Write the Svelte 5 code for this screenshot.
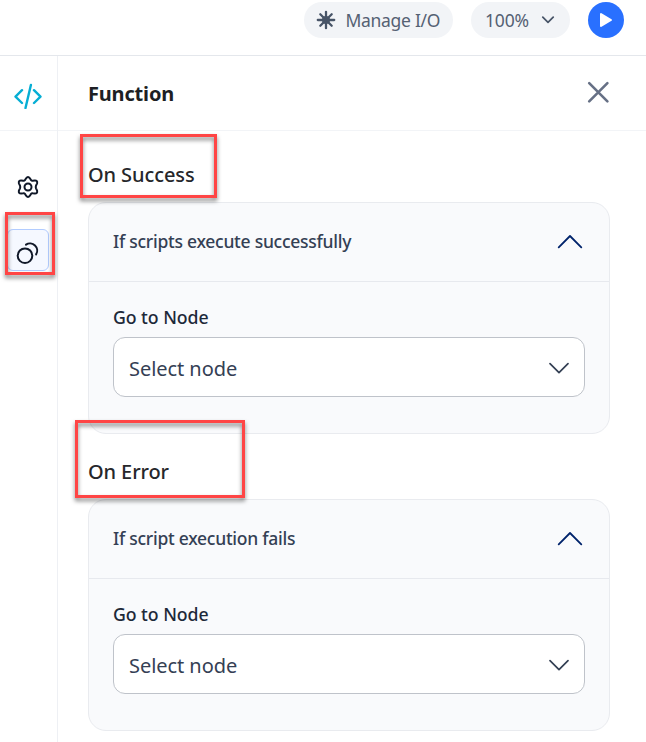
<script>
  const sections = [
    { title: 'On Success', rule: 'If scripts execute successfully', cls: 'success' },
    { title: 'On Error', rule: 'If script execution fails', cls: 'error' },
  ];
</script>

<div class="app">
  <header class="topbar">
    <button class="pill io">
      <svg width="20" height="20" viewBox="0 0 20 20" fill="none" stroke="#475467" stroke-width="2.3" stroke-linecap="round">
        <path d="M10 1.800v16.400M1.800 10h16.400M4.300 4.300l11.400 11.400M15.700 4.300L4.300 15.700" />
        <circle cx="10" cy="10" r="4" fill="#475467" stroke="none" />
      </svg>
      <span class="manage">Manage I/O</span>
    </button>
    <button class="pill zoom">
      <span class="percent">100%</span>
      <svg width="14" height="9" viewBox="0 0 14 9" fill="none" stroke="#475467" stroke-width="1.7" stroke-linecap="round" stroke-linejoin="round"><path d="M1.8 1.200L7 6.400l5.200-5.200" /></svg>
    </button>
    <button class="run" aria-label="Run">
      <svg width="36" height="36" viewBox="0 0 36 36"><path d="M13 12v12l10-6z" fill="#fff" stroke="#fff" stroke-width="2" stroke-linejoin="round" /></svg>
    </button>
  </header>

  <div class="body">
    <nav class="rail">
      <div class="code">
        <svg width="28" height="26" viewBox="0 0 28 26" fill="none" stroke="#06aed4" stroke-width="2.400" stroke-linecap="round" stroke-linejoin="round"><path d="M8 7.200L1.500 13.600L8 20M20 7.200l6.500 6.400L20 20M16.900 2L11.500 25" /></svg>
      </div>
      <button class="gear" aria-label="Settings">
        <svg width="22" height="24" viewBox="0 0 22 24" fill="none" stroke="#101828" stroke-width="2" stroke-linejoin="round">
          <path d="M9.100 3.300Q11 .8 12.900 3.300L14.100 5.200Q14.700 6 15.700 5.800L17.800 5.500Q20.700 5.400 20.100 8.300L19 10.700Q18.500 12 19 13.300L20.100 15.700Q20.700 18.600 17.800 18.500L15.700 18.200Q14.700 18 14.100 18.800L12.900 20.700Q11 23.200 9.100 20.700L7.900 18.800Q7.300 18 6.300 18.200L4.200 18.500Q1.300 18.600 1.900 15.700L3 13.300Q3.500 12 3 10.700L1.900 8.300Q1.300 5.400 4.200 5.500L6.300 5.800Q7.300 6 7.900 5.200Z" />
          <circle cx="11" cy="12" r="3.500" />
        </svg>
      </button>
      <button class="links" aria-label="Connections">
        <svg width="24" height="24" viewBox="0 0 24 24" fill="none" stroke="#101828" stroke-width="2" stroke-linecap="round"><circle cx="9" cy="15.700" r="7.300" /><path d="M10 4.600A7.200 7.200 0 0 1 20.100 14.400" /></svg>
        <i class="callout c-links"></i>
      </button>
    </nav>

    <main>
      <div class="heading">
        <h1>Function</h1>
        <svg width="24" height="24" viewBox="0 0 24 24" fill="none" stroke="#667085" stroke-width="2.600" stroke-linecap="round"><path d="M3.200 2.200l18.200 18.200M21.400 2.200L3.200 20.400" /></svg>
      </div>
      <div class="content">
        {#each sections as s}
          <section>
            <h2 class={s.cls}><span>{s.title}</span><i class="callout c-{s.cls}"></i></h2>
            <div class="card">
              <div class="rule">
                <span>{s.rule}</span>
                <svg width="26" height="15" viewBox="0 0 26 15" fill="none" stroke="#00236b" stroke-width="1.800" stroke-linecap="round" stroke-linejoin="round"><path d="M1.700 13.300L13 2l11.300 11.300" /></svg>
              </div>
              <div class="field">
                <span class="label">Go to Node</span>
                <div class="select">
                  <span>Select node</span>
                  <svg width="20" height="12" viewBox="0 0 20 12" fill="none" stroke="#344054" stroke-width="1.700" stroke-linecap="round" stroke-linejoin="round"><path d="M1 1.600l9 9 9-9" /></svg>
                </div>
              </div>
            </div>
          </section>
        {/each}
      </div>
    </main>
  </div>
</div>

<style>
  .app { width: 646px; height: 742px; overflow: hidden; background: #fff; display: flex; flex-direction: column; font-family: "Noto Sans", "Open Sans", sans-serif; color: #1d2939; }
  .app * { box-sizing: border-box; }
  span, h1 { white-space: nowrap; }
  svg { display: block; flex: none; }
  button { border: 0; padding: 0; margin: 0; background: none; font: inherit; color: inherit; }
  .topbar { height: 56px; flex: none; border-bottom: 1px solid #e4e7ec; display: flex; align-items: flex-start; justify-content: flex-end; gap: 18px; padding: 2px 22px 0 0; }
  .pill { height: 36px; border-radius: 18px; background: #f2f4f7; display: flex; align-items: center; color: #556173; font-size: 17.5px; }
  .io { width: 149px; padding-left: 12px; gap: 9.500px; }
  .zoom { width: 99px; padding: 0 15px 0 14px; justify-content: space-between; }
  .manage { letter-spacing: -0.3px; }
  .percent { letter-spacing: -0.15px; }
  .run { width: 36px; height: 36px; border-radius: 50%; background: #2970ff; }
  .body { flex: 1; display: flex; min-height: 0; }
  .rail { width: 58px; flex: none; border-right: 1px solid #eef0f4; display: flex; flex-direction: column; align-items: center; }
  .code { width: 100%; height: 75px; border-bottom: 1px solid #f2f4f7; display: flex; justify-content: center; padding: 27px 1px 0 0; }
  .gear { width: 22px; height: 24px; margin: 44px 2px 0 0; }
  .links { position: relative; width: 42px; height: 42px; margin: 30px 1px 0 0; background: #f5f8ff; border: 1px solid #b2ccff; border-radius: 6px; padding: 4px 0 0 8px; }
  main { flex: 1; min-width: 0; }
  .heading { height: 75px; border-bottom: 1px solid #f2f4f7; display: flex; align-items: center; justify-content: space-between; padding: 0 36px 0 30px; }
  h1 { margin: 0; font-size: 20px; font-weight: 700; letter-spacing: -0.18px; color: #1d1f24; }
  .content { padding: 0 36px 0 30px; }
  h2 { position: relative; margin: 0; font-size: 20px; font-weight: 500; line-height: 30px; color: #26272b; letter-spacing: -0.1px; }
  .success { height: 71px; padding-top: 29px; }
  .error { height: 65px; padding-top: 23px; }
  .callout { position: absolute; border: 3px solid #ff4545; filter: drop-shadow(0 3px 2px rgba(0, 0, 0, 0.5)); }
  .c-links { left: -3px; top: -18px; width: 50px; height: 63px; }
  .c-success { left: -8px; top: 3px; width: 137px; height: 64px; z-index: 1; }
  .c-error { left: -13px; top: -14px; width: 170px; height: 78px; z-index: 1; }
  .card { width: 522px; height: 232px; border: 1px solid #e9ebef; border-radius: 18px; background: #f9fafc; }
  .rule { height: 79px; border-bottom: 1px solid #e7e9ee; padding: 0 26px 1px 24px; display: flex; align-items: center; justify-content: space-between; font-size: 17.5px; font-weight: 500; color: #344054; }
  .rule span { letter-spacing: -0.26px; padding-bottom: 2px; }
  .field { padding: 22px 24px 0; display: flex; flex-direction: column; }
  .label { font-size: 17.7px; font-weight: 500; line-height: 26px; height: 33px; color: #1d2939; letter-spacing: -0.05px; }
  .select { height: 60px; border: 1px solid #bfc3ca; border-radius: 12px; background: #fff; display: flex; align-items: center; justify-content: space-between; padding: 2px 15px 0 15px; font-size: 20px; color: #344054; letter-spacing: -0.05px; }
</style>
